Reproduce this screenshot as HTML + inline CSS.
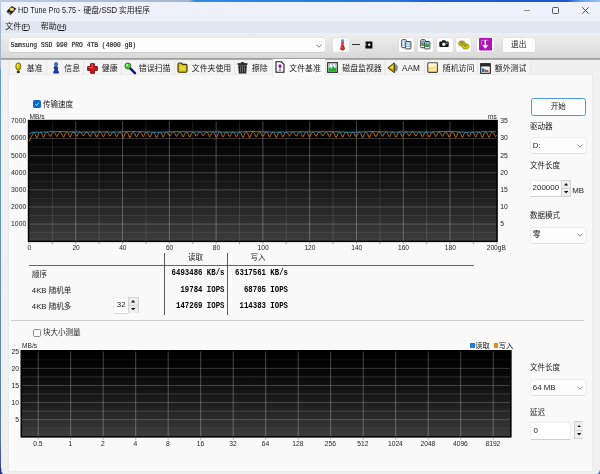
<!DOCTYPE html>
<html lang="zh-CN"><head><meta charset="utf-8"><title>HD Tune Pro 5.75 - 硬盘/SSD 实用程序</title>
<style>
html,body{margin:0;padding:0;width:600px;height:474px;overflow:hidden;background:#f0f0f0;}
body{position:relative;filter:blur(0.3px);font-family:'Liberation Sans','Noto Sans CJK SC',sans-serif;}
body>div,body>span,body>svg{position:absolute;}
.t{line-height:12px;height:12px;white-space:nowrap;font-family:'Liberation Sans','Noto Sans CJK SC',sans-serif;}
u{text-decoration:underline;text-decoration-thickness:0.5px;text-underline-offset:1px;}
</style></head><body>
<div style="left:0px;top:0px;width:600px;height:474px;background:#f0f0f0;"></div>
<div style="left:0px;top:0px;width:600px;height:20.5px;background:#eef1f9;"></div>
<div style="left:0px;top:20.5px;width:600px;height:12.2px;background:#e0e7f1;"></div>
<div style="left:0px;top:32.7px;width:600px;height:25.3px;background:linear-gradient(#f0f0f0 0,#e8e8e8 30%,#e0e0e0 70%,#d8d8d8 100%);"></div>
<div style="left:0px;top:57.5px;width:600px;height:2.5px;background:linear-gradient(#cccccc,#868686 40%,#8c8c8c 60%,#e2e2e2);"></div>
<div style="left:0px;top:60px;width:600px;height:15.4px;background:#f0f0f0;"></div>
<div style="left:0px;top:0px;width:600px;height:1.5px;background:linear-gradient(90deg,#bccbe2 0,#a8bcd6 20%,#a2b8d2 31.5%,#3088e4 32.5%,#2a7fe0 50%,#2a74dc 66%,#1c5cd4 72%,#1a56cc 94.5%,#5a9cea 96.5%,#9cc4f2 100%);"></div>
<div style="left:0px;top:0px;width:1.25px;height:474px;background:linear-gradient(#c4d0e2 0,#a4b6d4 20px,#a6b6cc 68px,#5b9bd0 70px,#6a96c0 200px,#5a78aa 440px,#3a4a92 466px,#262c88 474px);"></div>
<svg style="left:0;top:468px" width="4" height="6" viewBox="0 0 4 6"><path d="M0 0 L0 6 L3 6 Q0.8 4 1.2 0 Z" fill="#262c88"/></svg>
<svg style="left:596px;top:470px" width="4" height="4" viewBox="0 0 4 4"><path d="M4 0 L4 4 L1 4 Q3.4 3 4 0 Z" fill="#4a70c0"/></svg>
<div style="left:9.7px;top:60.2px;width:520.5px;height:15.3px;background:#f4f4f4;"></div>
<div style="left:9.299999999999999px;top:60.5px;width:0.8px;height:14.8px;background:#e6e6e6;"></div>
<div style="left:46.1px;top:60.5px;width:0.8px;height:14.8px;background:#e6e6e6;"></div>
<div style="left:83.1px;top:60.5px;width:0.8px;height:14.8px;background:#e6e6e6;"></div>
<div style="left:120.6px;top:60.5px;width:0.8px;height:14.8px;background:#e6e6e6;"></div>
<div style="left:173.6px;top:60.5px;width:0.8px;height:14.8px;background:#e6e6e6;"></div>
<div style="left:233.6px;top:60.5px;width:0.8px;height:14.8px;background:#e6e6e6;"></div>
<div style="left:383.6px;top:60.5px;width:0.8px;height:14.8px;background:#e6e6e6;"></div>
<div style="left:423.6px;top:60.5px;width:0.8px;height:14.8px;background:#e6e6e6;"></div>
<div style="left:476.6px;top:60.5px;width:0.8px;height:14.8px;background:#e6e6e6;"></div>
<div style="left:529.8000000000001px;top:60.5px;width:0.8px;height:14.8px;background:#e6e6e6;"></div>
<div style="left:8.5px;top:74.8px;width:583.3px;height:396.2px;background:#f9f9f9;box-shadow:0 0 0 0.6px #e6e6e6;"></div>
<div style="left:273px;top:59.4px;width:52px;height:16.6px;background:#fbfbfb;box-shadow:-0.6px 0 0 #e0e0e0,0.6px 0 0 #e0e0e0;"></div>
<svg style="left:5.5px;top:5px" width="11" height="11" viewBox="0 0 11 11"><path d="M0.7 6.2 L5.8 1 L10.3 3.8 L5 9.6 Z" fill="#141414"/><path d="M0.7 6.2 L5 9.6 L5 10.4 L0.7 7.2 Z" fill="#555"/><ellipse cx="5.9" cy="4.3" rx="2.3" ry="1.9" fill="#e2b54e"/><ellipse cx="5.7" cy="4" rx="1" ry="0.8" fill="#fff0c8"/><path d="M3 7 L4.6 8.3" stroke="#ddd" stroke-width="0.7"/></svg>
<span class="t" style="left:18px;top:5.10px;font-size:8.2px;color:#1a1a1a;transform:scaleX(0.885);transform-origin:0 50%;">HD Tune Pro 5.75 -</span>
<span class="t" style="left:83.5px;top:5.00px;font-size:7.75px;color:#1a1a1a;">硬盘/<span style="font-size:8.2px;letter-spacing:-0.4px">SSD</span> 实用程序</span>
<div style="left:523.6px;top:10.1px;width:6.4px;height:0.75px;background:#8c8c8c;"></div>
<div style="left:552.1px;top:7.1px;width:7.4px;height:7.4px;border:1.05px solid #555;border-radius:1.4px;box-sizing:border-box;"></div>
<svg style="left:582.3px;top:7.4px" width="7" height="7" viewBox="0 0 7 7"><path d="M0.3 0.3 L6.7 6.7 M6.7 0.3 L0.3 6.7" stroke="#444" stroke-width="0.95" fill="none"/></svg>
<span class="t" style="left:5.2px;top:21.20px;font-size:8px;color:#1a1a1a;">文件<span style="font-size:8px;letter-spacing:-0.6px">(<u>F</u>)</span></span>
<span class="t" style="left:40.8px;top:21.20px;font-size:8px;color:#1a1a1a;">帮助<span style="font-size:8px;letter-spacing:-0.6px">(<u>H</u>)</span></span>
<div style="left:8.5px;top:38px;width:316.5px;height:13.5px;background:#fdfdfd;border-radius:2px;box-shadow:0 0.5px 0 #bdbdbd, 0 0 0 0.5px #e3e3e3;"></div>
<span class="t" style="left:10.5px;top:39.70px;font-size:6.35px;color:#111;font-family:'Liberation Mono','Noto Sans Mono CJK SC',monospace;font-weight:normal;-webkit-text-stroke:0.12px #111;transform:scaleY(1.1);">Samsung SSD 990 PRO 4TB (4000 gB)</span>
<svg style="left:316px;top:43.5px" width="6" height="4" viewBox="0 0 6 4"><path d="M0.4 0.5 L3 3.2 L5.6 0.5" stroke="#666" stroke-width="0.8" fill="none"/></svg>
<div style="left:333.2px;top:38px;width:15.5px;height:14px;background:#fcfcfc;border-radius:2px;box-shadow:0 0 0 0.5px #dadada;"></div>
<svg style="left:338.5px;top:39px" width="7" height="12" viewBox="0 0 7 12"><rect x="2.5" y="0.5" width="2" height="7.5" rx="1" fill="#e83030" stroke="#8a2020" stroke-width="0.4"/><rect x="2.7" y="0.6" width="1.6" height="2.2" rx="0.8" fill="#6aa8d8"/><circle cx="3.5" cy="9.2" r="2.1" fill="#e02020" stroke="#7a1010" stroke-width="0.5"/><circle cx="2.9" cy="8.6" r="0.6" fill="#ff9a8a"/></svg>
<div style="left:352px;top:44.3px;width:8.4px;height:0.8px;background:#333;"></div>
<svg style="left:365px;top:41px" width="8" height="8" viewBox="0 0 8 8"><rect x="0.4" y="0.4" width="7" height="7.2" rx="0.6" fill="#0a0a0a"/><circle cx="4.2" cy="3.8" r="1.2" fill="#eee"/><rect x="0.4" y="2.6" width="1" height="1.6" fill="#ddd"/></svg>
<div style="left:398.5px;top:38px;width:15.5px;height:13.7px;background:#fcfcfc;border-radius:2px;box-shadow:0 0 0 0.5px #dcdcdc, 0 0.6px 0 #c8c8c8;"></div>
<div style="left:417.5px;top:38px;width:15.5px;height:13.7px;background:#fcfcfc;border-radius:2px;box-shadow:0 0 0 0.5px #dcdcdc, 0 0.6px 0 #c8c8c8;"></div>
<div style="left:437px;top:38px;width:15.5px;height:13.7px;background:#fcfcfc;border-radius:2px;box-shadow:0 0 0 0.5px #dcdcdc, 0 0.6px 0 #c8c8c8;"></div>
<div style="left:455.5px;top:38px;width:15.5px;height:13.7px;background:#fcfcfc;border-radius:2px;box-shadow:0 0 0 0.5px #dcdcdc, 0 0.6px 0 #c8c8c8;"></div>
<div style="left:477px;top:38px;width:16.5px;height:13.7px;background:#fcfcfc;border-radius:2px;box-shadow:0 0 0 0.5px #dcdcdc, 0 0.6px 0 #c8c8c8;"></div>
<svg style="left:400.8px;top:39.2px" width="11" height="11" viewBox="0 0 11 11"><rect x="0.7" y="0.7" width="4.6" height="8" rx="0.8" fill="#fff" stroke="#2e2e2e" stroke-width="0.9"/><rect x="1.4" y="1.6" width="3" height="5.4" fill="#9ccaf6"/><rect x="2" y="2.4" width="1.2" height="3.6" fill="#e8f4ff"/><rect x="4.7" y="2.5" width="5.2" height="7.4" rx="0.8" fill="#fff" stroke="#2e2e2e" stroke-width="0.9"/><rect x="5.4" y="3.4" width="3.6" height="4.6" fill="#8cc0f4"/><rect x="6.4" y="4.2" width="1.4" height="2.8" fill="#e8f4ff"/></svg>
<svg style="left:420px;top:39.2px" width="11" height="11" viewBox="0 0 11 11"><rect x="0.7" y="0.7" width="4.6" height="8" rx="0.8" fill="#fff" stroke="#2e2e2e" stroke-width="0.9"/><rect x="1.4" y="1.6" width="3" height="5.4" fill="#5a9ae0"/><rect x="1.4" y="4" width="3" height="2.4" fill="#38a838"/><rect x="2.8" y="3.2" width="1.4" height="1.4" fill="#e8d020"/><rect x="4.7" y="2.5" width="5.2" height="7.4" rx="0.8" fill="#fff" stroke="#2e2e2e" stroke-width="0.9"/><rect x="5.4" y="3.4" width="3.6" height="4.6" fill="#4a90e0"/><rect x="5.4" y="5.2" width="3.6" height="2.6" fill="#2e9a2e"/><rect x="7" y="4.2" width="1.4" height="1.4" fill="#e8d020"/></svg>
<svg style="left:439.2px;top:40.2px" width="10" height="8" viewBox="0 0 10 8"><rect x="0.3" y="1.6" width="9.4" height="5.4" rx="0.8" fill="#161616"/><rect x="3" y="0.3" width="3.6" height="1.8" rx="0.5" fill="#161616"/><circle cx="4.8" cy="4.3" r="1.7" fill="#f2f2f2"/><rect x="7" y="2.6" width="1.8" height="1.4" fill="#28b040"/></svg>
<svg style="left:458px;top:39.6px" width="12" height="10" viewBox="0 0 12 10"><ellipse cx="3.8" cy="3.4" rx="3.3" ry="2.7" fill="#c4bc08" stroke="#7a7400" stroke-width="0.5"/><ellipse cx="3.8" cy="2.8" rx="1.6" ry="1.1" fill="#8a8660"/><ellipse cx="7.6" cy="6.3" rx="3.5" ry="2.8" fill="#cfc80c" stroke="#7a7400" stroke-width="0.5"/><ellipse cx="7.4" cy="5.6" rx="1.7" ry="1.1" fill="#8a8660"/></svg>
<svg style="left:479px;top:38px" width="13.4" height="12.6" viewBox="0 0 13.4 12.6"><rect x="0" y="0" width="13.4" height="12.6" rx="1" fill="#ae14b4"/><path d="M2.4 7 V2.2 H9.4" stroke="#d678dc" stroke-width="0.9" fill="none"/><path d="M6.3 2 V8.4" stroke="#fff" stroke-width="1.5"/><path d="M3.2 7.2 L6.3 10.8 L9.4 7.2 Z" fill="#fff"/></svg>
<div style="left:503px;top:38px;width:31.8px;height:13.6px;background:#fdfdfd;border-radius:2px;box-shadow:0 0 0 0.5px #dedede, 0 0.6px 0 #c6c6c6;"></div>
<span class="t" style="left:418.70000000000005px;width:200px;text-align:center;top:38.80px;font-size:7.6px;color:#1a1a1a;">退出</span>
<svg style="left:14.6px;top:61.8px" width="7" height="12" viewBox="0 0 7 12"><ellipse cx="3.3" cy="4.4" rx="2.5" ry="3.7" fill="#d4be00" stroke="#4a4000" stroke-width="0.7"/><ellipse cx="2.7" cy="3.6" rx="0.9" ry="1.8" fill="#f2ea4a"/><rect x="2.5" y="7.8" width="1.7" height="1.4" fill="#7a6600"/><rect x="1.9" y="8.9" width="2.9" height="2.1" rx="0.6" fill="#3a3000"/></svg>
<span class="t" style="left:26.8px;top:62.60px;font-size:7.9px;color:#1a1a1a;">基准</span>
<svg style="left:51.5px;top:61.8px" width="8" height="12" viewBox="0 0 8 12"><circle cx="4.1" cy="2.2" r="1.7" fill="#2a80e0" stroke="#0a2a80" stroke-width="0.5"/><path d="M2.2 4.8 H5.4 V9.4 H6.4 V11.1 H1.8 V9.4 H2.9 V6.4 H2.2 Z" fill="#1440c8" stroke="#06104a" stroke-width="0.7"/></svg>
<span class="t" style="left:64.3px;top:62.60px;font-size:7.9px;color:#1a1a1a;">信息</span>
<svg style="left:87.3px;top:62.5px" width="11" height="11" viewBox="0 0 11 11"><path d="M3.6 0.7 H7.4 V3.6 H10.3 V7.4 H7.4 V10.3 H3.6 V7.4 H0.7 V3.6 H3.6 Z" fill="#dc1414" stroke="#5a0808" stroke-width="0.9"/><path d="M4.4 1.6 H5.4 V4.4 H1.6" stroke="#ff7a6a" stroke-width="0.7" fill="none"/></svg>
<span class="t" style="left:101.8px;top:62.60px;font-size:7.9px;color:#1a1a1a;">健康</span>
<svg style="left:124px;top:61.5px" width="13" height="13" viewBox="0 0 13 13"><path d="M6.2 6.4 L11 11.2" stroke="#0c1478" stroke-width="2.4" stroke-linecap="round"/><circle cx="3.9" cy="3.9" r="3" fill="#4fd030" stroke="#1e5a14" stroke-width="0.8"/><circle cx="3.1" cy="3.1" r="1" fill="#d9ffc8"/></svg>
<span class="t" style="left:138.8px;top:62.60px;font-size:7.9px;color:#1a1a1a;">错误扫描</span>
<svg style="left:177px;top:62.2px" width="11" height="11" viewBox="0 0 11 11"><path d="M1 2.4 Q1 1 2.2 1 H4.6 L5.6 2.4 H8.8 Q10 2.4 10 3.6 V9 Q10 10.2 8.8 10.2 H2.2 Q1 10.2 1 9 Z" fill="#d8c21a" stroke="#3a3000" stroke-width="1.1"/><rect x="2.6" y="4.2" width="5.8" height="4.4" fill="#e8d638"/></svg>
<span class="t" style="left:191.8px;top:62.60px;font-size:7.9px;color:#1a1a1a;">文件夹使用</span>
<svg style="left:236.5px;top:62px" width="11" height="12" viewBox="0 0 11 12"><rect x="0.6" y="1.2" width="9.8" height="1.7" fill="#1a1a1a"/><rect x="3.8" y="0.2" width="3.4" height="1.3" fill="#1a1a1a"/><path d="M1.2 3.2 H9.8 L9.2 11.4 H1.8 Z" fill="#222"/><path d="M3.6 4.2V10.4M5.5 4.2V10.4M7.4 4.2V10.4" stroke="#a8a8a8" stroke-width="0.6"/></svg>
<span class="t" style="left:251.8px;top:62.60px;font-size:7.9px;color:#1a1a1a;">擦除</span>
<svg style="left:275px;top:61px" width="10" height="12" viewBox="0 0 10 12"><path d="M1 0.8 H6.4 L9 3.4 V11.2 H1 Z" fill="#fff" stroke="#1a1a1a" stroke-width="1.1"/><path d="M5 2.8 L6.8 5 L5 8.2 L3.2 5 Z" fill="#a818b8"/><rect x="4.4" y="8.4" width="1.2" height="1.6" fill="#333"/></svg>
<span class="t" style="left:289.3px;top:62.60px;font-size:7.9px;color:#1a1a1a;">文件基准</span>
<svg style="left:327px;top:62px" width="11" height="11" viewBox="0 0 11 11"><rect x="0.7" y="0.7" width="9.6" height="9.6" fill="#f0f0f0" stroke="#1a1a1a" stroke-width="1.1"/><path d="M1.6 9.8 V6.5 L3 4.6 L4.4 7 L6 3.4 L7.6 6.2 L9.4 4.8 V9.8 Z" fill="#1fae2c"/><path d="M2 3 h1 M5 2.4 h1 M8 3 h1" stroke="#2a5ad0" stroke-width="0.8"/></svg>
<span class="t" style="left:342.3px;top:62.60px;font-size:7.9px;color:#1a1a1a;">磁盘监视器</span>
<svg style="left:387.2px;top:62px" width="12" height="12" viewBox="0 0 12 12"><ellipse cx="8.2" cy="5.8" rx="2.6" ry="3.6" fill="#8a8a8a"/><path d="M0.8 5.8 L7.4 0.8 V10.8 Z" fill="#b8a010" stroke="#3a3000" stroke-width="0.9" stroke-linejoin="round"/><path d="M2.6 5.6 L6.2 3 V7" fill="#f0e030"/></svg>
<span class="t" style="left:402.1px;top:62.60px;font-size:7.9px;color:#1a1a1a;"><span style="font-size:8.2px">AAM</span></span>
<svg style="left:427px;top:62.4px" width="11" height="11" viewBox="0 0 11 11"><rect x="0.8" y="0.8" width="9.6" height="9.6" rx="0.8" fill="#f9eaa6" stroke="#4a4438" stroke-width="1.1"/><rect x="1.6" y="1.6" width="8" height="3" fill="#fdf6d4"/><path d="M2.2 7.8 L4.2 5.8 L5.6 6.8 L8.6 3.2" stroke="#e8c060" stroke-width="0.8" fill="none"/></svg>
<span class="t" style="left:442.8px;top:62.60px;font-size:7.9px;color:#1a1a1a;">随机访问</span>
<svg style="left:479.8px;top:62.8px" width="11" height="11" viewBox="0 0 11 11"><rect x="0.7" y="0.7" width="9.6" height="9.6" fill="#fff" stroke="#1a1a1a" stroke-width="1.1"/><rect x="0.7" y="0.7" width="9.6" height="2.8" fill="#2a2a2a"/><rect x="1.8" y="5.4" width="2.6" height="3.6" fill="#2a6ad8"/><rect x="4.4" y="6.4" width="2.2" height="2.6" fill="#28a838"/><rect x="6.4" y="7" width="2" height="2" fill="#d83020"/></svg>
<span class="t" style="left:494.8px;top:62.60px;font-size:7.9px;color:#1a1a1a;">额外测试</span>
<div style="left:32.6px;top:100px;width:8.3px;height:8.4px;background:#0f69c4;border-radius:1.7px;"></div>
<svg style="left:33px;top:100px" width="8" height="8" viewBox="0 0 8 8"><path d="M2.3 4.3 L3.5 5.5 L5.8 2.9" stroke="#fff" stroke-width="0.8" fill="none"/></svg>
<span class="t" style="left:43px;top:98.80px;font-size:7.5px;color:#1a1a1a;">传输速度</span>
<svg style="left:0;top:0" width="600" height="474" viewBox="0 0 600 474"><defs><linearGradient id="g1" x1="0" y1="0" x2="0" y2="1"><stop offset="0" stop-color="#000"/><stop offset="0.18" stop-color="#030303"/><stop offset="0.6" stop-color="#1c1c1c"/><stop offset="1" stop-color="#3d3d3d"/></linearGradient></defs><rect x="28.0" y="120.0" width="469.5" height="121.9" fill="url(#g1)"/><line x1="28.0" x2="497.5" y1="232.65" y2="232.65" stroke="rgba(255,255,255,0.09)" stroke-width="0.8"/><line x1="28.0" x2="497.5" y1="224.10" y2="224.10" stroke="rgba(255,255,255,0.27)" stroke-width="0.8"/><line x1="28.0" x2="497.5" y1="215.55" y2="215.55" stroke="rgba(255,255,255,0.09)" stroke-width="0.8"/><line x1="28.0" x2="497.5" y1="207.00" y2="207.00" stroke="rgba(255,255,255,0.27)" stroke-width="0.8"/><line x1="28.0" x2="497.5" y1="198.45" y2="198.45" stroke="rgba(255,255,255,0.09)" stroke-width="0.8"/><line x1="28.0" x2="497.5" y1="189.90" y2="189.90" stroke="rgba(255,255,255,0.27)" stroke-width="0.8"/><line x1="28.0" x2="497.5" y1="181.35" y2="181.35" stroke="rgba(255,255,255,0.09)" stroke-width="0.8"/><line x1="28.0" x2="497.5" y1="172.80" y2="172.80" stroke="rgba(255,255,255,0.27)" stroke-width="0.8"/><line x1="28.0" x2="497.5" y1="164.25" y2="164.25" stroke="rgba(255,255,255,0.09)" stroke-width="0.8"/><line x1="28.0" x2="497.5" y1="155.70" y2="155.70" stroke="rgba(255,255,255,0.27)" stroke-width="0.8"/><line x1="28.0" x2="497.5" y1="147.15" y2="147.15" stroke="rgba(255,255,255,0.09)" stroke-width="0.8"/><line x1="28.0" x2="497.5" y1="138.60" y2="138.60" stroke="rgba(255,255,255,0.27)" stroke-width="0.8"/><line x1="28.0" x2="497.5" y1="130.05" y2="130.05" stroke="rgba(255,255,255,0.09)" stroke-width="0.8"/><line x1="52.39" x2="52.39" y1="120.0" y2="241.9" stroke="rgba(255,255,255,0.13)" stroke-width="0.9"/><line x1="75.78" x2="75.78" y1="120.0" y2="241.9" stroke="rgba(255,255,255,0.3)" stroke-width="0.9"/><line x1="99.17" x2="99.17" y1="120.0" y2="241.9" stroke="rgba(255,255,255,0.13)" stroke-width="0.9"/><line x1="122.56" x2="122.56" y1="120.0" y2="241.9" stroke="rgba(255,255,255,0.3)" stroke-width="0.9"/><line x1="145.95" x2="145.95" y1="120.0" y2="241.9" stroke="rgba(255,255,255,0.13)" stroke-width="0.9"/><line x1="169.34" x2="169.34" y1="120.0" y2="241.9" stroke="rgba(255,255,255,0.3)" stroke-width="0.9"/><line x1="192.73" x2="192.73" y1="120.0" y2="241.9" stroke="rgba(255,255,255,0.13)" stroke-width="0.9"/><line x1="216.12" x2="216.12" y1="120.0" y2="241.9" stroke="rgba(255,255,255,0.3)" stroke-width="0.9"/><line x1="239.51" x2="239.51" y1="120.0" y2="241.9" stroke="rgba(255,255,255,0.13)" stroke-width="0.9"/><line x1="262.90" x2="262.90" y1="120.0" y2="241.9" stroke="rgba(255,255,255,0.3)" stroke-width="0.9"/><line x1="286.29" x2="286.29" y1="120.0" y2="241.9" stroke="rgba(255,255,255,0.13)" stroke-width="0.9"/><line x1="309.68" x2="309.68" y1="120.0" y2="241.9" stroke="rgba(255,255,255,0.3)" stroke-width="0.9"/><line x1="333.07" x2="333.07" y1="120.0" y2="241.9" stroke="rgba(255,255,255,0.13)" stroke-width="0.9"/><line x1="356.46" x2="356.46" y1="120.0" y2="241.9" stroke="rgba(255,255,255,0.3)" stroke-width="0.9"/><line x1="379.85" x2="379.85" y1="120.0" y2="241.9" stroke="rgba(255,255,255,0.13)" stroke-width="0.9"/><line x1="403.24" x2="403.24" y1="120.0" y2="241.9" stroke="rgba(255,255,255,0.3)" stroke-width="0.9"/><line x1="426.63" x2="426.63" y1="120.0" y2="241.9" stroke="rgba(255,255,255,0.13)" stroke-width="0.9"/><line x1="450.02" x2="450.02" y1="120.0" y2="241.9" stroke="rgba(255,255,255,0.3)" stroke-width="0.9"/><line x1="473.41" x2="473.41" y1="120.0" y2="241.9" stroke="rgba(255,255,255,0.13)" stroke-width="0.9"/><rect x="28.5" y="120.5" width="468.5" height="120.9" fill="none" stroke="#000" stroke-width="1.4"/><line x1="29.00" x2="29.00" y1="241.9" y2="244.1" stroke="#8a8a8a" stroke-width="0.7"/><line x1="52.39" x2="52.39" y1="241.9" y2="244.1" stroke="#8a8a8a" stroke-width="0.7"/><line x1="75.78" x2="75.78" y1="241.9" y2="244.1" stroke="#8a8a8a" stroke-width="0.7"/><line x1="99.17" x2="99.17" y1="241.9" y2="244.1" stroke="#8a8a8a" stroke-width="0.7"/><line x1="122.56" x2="122.56" y1="241.9" y2="244.1" stroke="#8a8a8a" stroke-width="0.7"/><line x1="145.95" x2="145.95" y1="241.9" y2="244.1" stroke="#8a8a8a" stroke-width="0.7"/><line x1="169.34" x2="169.34" y1="241.9" y2="244.1" stroke="#8a8a8a" stroke-width="0.7"/><line x1="192.73" x2="192.73" y1="241.9" y2="244.1" stroke="#8a8a8a" stroke-width="0.7"/><line x1="216.12" x2="216.12" y1="241.9" y2="244.1" stroke="#8a8a8a" stroke-width="0.7"/><line x1="239.51" x2="239.51" y1="241.9" y2="244.1" stroke="#8a8a8a" stroke-width="0.7"/><line x1="262.90" x2="262.90" y1="241.9" y2="244.1" stroke="#8a8a8a" stroke-width="0.7"/><line x1="286.29" x2="286.29" y1="241.9" y2="244.1" stroke="#8a8a8a" stroke-width="0.7"/><line x1="309.68" x2="309.68" y1="241.9" y2="244.1" stroke="#8a8a8a" stroke-width="0.7"/><line x1="333.07" x2="333.07" y1="241.9" y2="244.1" stroke="#8a8a8a" stroke-width="0.7"/><line x1="356.46" x2="356.46" y1="241.9" y2="244.1" stroke="#8a8a8a" stroke-width="0.7"/><line x1="379.85" x2="379.85" y1="241.9" y2="244.1" stroke="#8a8a8a" stroke-width="0.7"/><line x1="403.24" x2="403.24" y1="241.9" y2="244.1" stroke="#8a8a8a" stroke-width="0.7"/><line x1="426.63" x2="426.63" y1="241.9" y2="244.1" stroke="#8a8a8a" stroke-width="0.7"/><line x1="450.02" x2="450.02" y1="241.9" y2="244.1" stroke="#8a8a8a" stroke-width="0.7"/><line x1="473.41" x2="473.41" y1="241.9" y2="244.1" stroke="#8a8a8a" stroke-width="0.7"/><line x1="496.80" x2="496.80" y1="241.9" y2="244.1" stroke="#8a8a8a" stroke-width="0.7"/><polyline points="29.00,141.16 29.50,140.21 30.00,139.26 30.50,138.31 31.00,137.36 31.50,136.41 32.00,135.46 32.50,134.51 33.00,133.56 33.50,132.27 34.00,132.41 34.50,132.86 35.00,133.66 35.50,134.81 36.00,136.27 36.50,137.56 37.00,137.69 37.50,136.77 38.00,135.23 38.50,133.97 39.00,133.06 39.50,132.51 40.00,132.28 40.50,132.33 41.00,132.67 41.50,133.33 42.00,134.30 42.50,135.55 43.00,136.84 43.50,137.27 44.00,136.65 44.50,135.27 45.00,134.05 45.50,133.15 46.00,132.58 46.50,132.30 47.00,132.27 47.50,132.48 48.00,132.94 48.50,133.67 49.00,134.64 49.50,135.81 50.00,136.38 50.50,136.15 51.00,135.13 51.50,134.05 52.00,133.21 52.50,132.64 53.00,132.33 53.50,132.25 54.00,132.38 54.50,132.74 55.00,133.37 55.50,134.26 56.00,135.41 56.50,136.33 57.00,136.39 57.50,135.61 58.00,134.46 58.50,133.52 59.00,132.83 59.50,132.42 60.00,132.26 60.50,132.33 61.00,132.67 61.50,133.30 62.00,134.24 62.50,135.49 63.00,136.74 63.50,137.12 64.00,136.53 64.50,135.17 65.00,134.00 65.50,133.12 66.00,132.56 66.50,132.29 67.00,132.29 67.50,132.56 68.00,133.12 68.50,134.00 69.00,135.17 69.50,136.53 70.00,137.11 70.50,136.73 71.00,135.48 71.50,134.24 72.00,133.29 72.50,132.66 73.00,132.33 73.50,132.26 74.00,132.42 74.50,132.82 75.00,133.49 75.50,134.40 76.00,135.50 76.50,136.23 77.00,136.16 77.50,135.26 78.00,134.16 78.50,133.30 79.00,132.71 79.50,132.37 80.00,132.24 80.50,132.32 81.00,132.60 81.50,133.11 82.00,133.85 82.50,134.81 83.00,135.70 83.50,135.89 84.00,135.38 84.50,134.34 85.00,133.48 85.50,132.84 86.00,132.44 86.50,132.26 87.00,132.28 87.50,132.52 88.00,133.02 88.50,133.80 89.00,134.85 89.50,136.05 90.00,136.60 90.50,136.23 91.00,135.12 91.50,134.03 92.00,133.18 92.50,132.61 93.00,132.32 93.50,132.27 94.00,132.48 94.50,132.97 95.00,133.78 95.50,134.91 96.00,136.31 96.50,137.16 97.00,137.05 97.50,135.90 98.00,134.58 98.50,133.53 99.00,132.80 99.50,132.39 100.00,132.26 100.50,132.39 101.00,132.78 101.50,133.48 102.00,134.47 102.50,135.70 103.00,136.76 103.50,136.83 104.00,136.01 104.50,134.70 105.00,133.65 105.50,132.90 106.00,132.45 106.50,132.26 107.00,132.30 107.50,132.57 108.00,133.10 108.50,133.88 109.00,134.89 109.50,135.94 110.00,136.32 110.50,135.85 111.00,134.74 111.50,133.75 112.00,133.01 112.50,132.52 113.00,132.29 113.50,132.27 114.00,132.46 114.50,132.91 115.00,133.64 115.50,134.65 116.00,135.90 116.50,136.57 117.00,136.40 117.50,135.38 118.00,134.24 118.50,133.34 119.00,132.71 119.50,132.36 120.00,132.26 120.50,132.42 121.00,132.86 121.50,133.64 122.00,134.76 122.50,136.19 123.00,137.36 123.50,137.43 124.00,136.45 124.50,135.01 125.00,133.84 125.50,132.99 126.00,132.48 126.50,132.27 127.00,132.36 127.50,132.75 128.00,133.48 128.50,134.55 129.00,135.94 129.50,137.30 130.00,137.67 130.50,136.97 131.00,135.43 131.50,134.13 132.00,133.18 132.50,132.58 133.00,132.30 133.50,132.30 134.00,132.56 134.50,133.11 135.00,133.97 135.50,135.10 136.00,136.41 136.50,136.96 137.00,136.57 137.50,135.36 138.00,134.16 138.50,133.25 139.00,132.65 139.50,132.33 140.00,132.26 140.50,132.42 141.00,132.83 141.50,133.51 142.00,134.47 142.50,135.66 143.00,136.50 143.50,136.48 144.00,135.56 144.50,134.39 145.00,133.45 145.50,132.79 146.00,132.40 146.50,132.26 147.00,132.36 147.50,132.71 148.00,133.37 148.50,134.36 149.00,135.64 149.50,136.85 150.00,137.13 150.50,136.47 151.00,135.09 151.50,133.94 152.00,133.08 152.50,132.53 153.00,132.29 153.50,132.32 154.00,132.63 154.50,133.27 155.00,134.26 155.50,135.58 156.00,137.04 156.50,137.66 157.00,137.14 157.50,135.72 158.00,134.38 158.50,133.35 159.00,132.68 159.50,132.33 160.00,132.28 160.50,132.49 161.00,133.00 161.50,133.82 162.00,134.93 162.50,136.27 163.00,137.03 163.50,136.86 164.00,135.70 164.50,134.42 165.00,133.42 165.50,132.75 166.00,132.37 166.50,132.25 167.00,132.36 167.50,132.70 168.00,133.30 168.50,134.14 169.00,135.19 169.50,136.09 170.00,136.16 170.50,135.47 171.00,134.35 171.50,133.46 172.00,132.81 172.50,132.42 173.00,132.25 173.50,132.30 174.00,132.55 174.50,133.04 175.00,133.80 175.50,134.81 176.00,135.89 176.50,136.31 177.00,135.88 177.50,134.79 178.00,133.80 178.50,133.04 179.00,132.54 179.50,132.29 180.00,132.27 180.50,132.49 181.00,132.98 181.50,133.78 182.00,134.88 182.50,136.24 183.00,136.94 183.50,136.75 184.00,135.62 184.50,134.38 185.00,133.41 185.50,132.73 186.00,132.36 186.50,132.26 187.00,132.42 187.50,132.85 188.00,133.59 188.50,134.63 189.00,135.92 189.50,136.93 190.00,136.93 190.50,135.99 191.00,134.66 191.50,133.61 192.00,132.87 192.50,132.43 193.00,132.26 193.50,132.33 194.00,132.63 194.50,133.18 195.00,133.99 195.50,135.02 196.00,136.01 196.50,136.26 197.00,135.72 197.50,134.57 198.00,133.61 198.50,132.91 199.00,132.47 199.50,132.27 200.00,132.27 200.50,132.47 201.00,132.88 201.50,133.54 202.00,134.43 202.50,135.48 203.00,135.96 203.50,135.71 204.00,134.78 204.50,133.83 205.00,133.09 205.50,132.58 206.00,132.31 206.50,132.25 207.00,132.41 207.50,132.80 208.00,133.48 208.50,134.46 209.00,135.69 209.50,136.59 210.00,136.62 210.50,135.70 211.00,134.50 211.50,133.53 212.00,132.83 212.50,132.41 213.00,132.26 213.50,132.37 214.00,132.75 214.50,133.46 215.00,134.50 215.50,135.84 216.00,137.09 216.50,137.35 217.00,136.63 217.50,135.17 218.00,133.97 218.50,133.08 219.00,132.53 219.50,132.29 220.00,132.31 220.50,132.61 221.00,133.20 221.50,134.11 222.00,135.29 222.50,136.59 223.00,137.11 223.50,136.60 224.00,135.31 224.50,134.11 225.00,133.20 225.50,132.61 226.00,132.31 226.50,132.26 227.00,132.45 227.50,132.88 228.00,133.59 228.50,134.56 229.00,135.73 229.50,136.43 230.00,136.31 230.50,135.32 231.00,134.20 231.50,133.32 232.00,132.71 232.50,132.36 233.00,132.25 233.50,132.36 234.00,132.72 234.50,133.36 235.00,134.29 235.50,135.49 236.00,136.57 236.50,136.71 237.00,136.00 237.50,134.75 238.00,133.72 238.50,132.95 239.00,132.47 239.50,132.27 240.00,132.33 240.50,132.66 241.00,133.31 241.50,134.32 242.00,135.66 242.50,137.08 243.00,137.64 243.50,137.06 244.00,135.62 244.50,134.30 245.00,133.30 245.50,132.65 246.00,132.32 246.50,132.29 247.00,132.56 247.50,133.15 248.00,134.10 248.50,135.38 249.00,136.92 249.50,137.68 250.00,137.39 250.50,136.05 251.00,134.62 251.50,133.52 252.00,132.78 252.50,132.38 253.00,132.26 253.50,132.42 254.00,132.85 254.50,133.59 255.00,134.61 255.50,135.86 256.00,136.83 256.50,136.81 257.00,135.88 257.50,134.58 258.00,133.56 258.50,132.84 259.00,132.42 259.50,132.26 260.00,132.32 260.50,132.62 261.00,133.19 261.50,134.02 262.00,135.10 262.50,136.17 263.00,136.48 263.50,135.96 264.00,134.77 264.50,133.76 265.00,133.00 265.50,132.51 266.00,132.28 266.50,132.28 267.00,132.53 267.50,133.05 268.00,133.88 268.50,135.01 269.00,136.36 269.50,137.00 270.00,136.69 270.50,135.51 271.00,134.30 271.50,133.35 272.00,132.70 272.50,132.35 273.00,132.27 273.50,132.46 274.00,132.95 274.50,133.77 275.00,134.93 275.50,136.36 276.00,137.36 276.50,137.33 277.00,136.20 277.50,134.79 278.00,133.67 278.50,132.88 279.00,132.43 279.50,132.26 280.00,132.37 280.50,132.74 281.00,133.41 281.50,134.37 282.00,135.58 282.50,136.67 283.00,136.84 283.50,136.13 284.00,134.79 284.50,133.72 285.00,132.95 285.50,132.48 286.00,132.27 286.50,132.29 287.00,132.52 287.50,133.00 288.00,133.71 288.50,134.65 289.00,135.67 289.50,136.08 290.00,135.69 290.50,134.67 291.00,133.72 291.50,133.00 292.00,132.53 292.50,132.29 293.00,132.25 293.50,132.41 294.00,132.79 294.50,133.43 295.00,134.32 295.50,135.42 296.00,136.11 296.50,136.05 297.00,135.17 297.50,134.13 298.00,133.29 298.50,132.70 299.00,132.36 299.50,132.25 300.00,132.37 300.50,132.74 301.00,133.41 301.50,134.38 302.00,135.63 302.50,136.74 303.00,136.89 303.50,136.13 304.00,134.83 304.50,133.75 305.00,132.96 305.50,132.48 306.00,132.27 306.50,132.32 307.00,132.64 307.50,133.25 308.00,134.18 308.50,135.38 309.00,136.63 309.50,137.07 310.00,136.50 310.50,135.18 311.00,134.01 311.50,133.13 312.00,132.57 312.50,132.30 313.00,132.27 313.50,132.48 314.00,132.94 314.50,133.66 315.00,134.63 315.50,135.78 316.00,136.34 316.50,136.10 317.00,135.08 317.50,134.01 318.00,133.18 318.50,132.63 319.00,132.33 319.50,132.25 320.00,132.37 320.50,132.70 321.00,133.29 321.50,134.12 322.00,135.16 322.50,136.00 323.00,136.04 323.50,135.32 324.00,134.26 324.50,133.40 325.00,132.78 325.50,132.40 326.00,132.25 326.50,132.32 327.00,132.63 327.50,133.22 328.00,134.11 328.50,135.28 329.00,136.48 329.50,136.87 330.00,136.34 330.50,135.06 331.00,133.95 331.50,133.11 332.00,132.56 332.50,132.29 333.00,132.30 333.50,132.58 334.00,133.17 334.50,134.11 335.00,135.38 335.50,136.88 336.00,137.56 336.50,137.19 337.00,135.85 337.50,134.49 338.00,133.44 338.50,132.73 339.00,132.36 339.50,132.27 340.00,132.46 340.50,132.95 341.00,133.76 341.50,134.88 342.00,136.24 342.50,137.17 343.00,137.10 343.50,135.99 344.00,134.64 344.50,133.57 345.00,132.83 345.50,132.41 346.00,132.26 346.50,132.35 347.00,132.69 347.50,133.31 348.00,134.20 348.50,135.33 349.00,136.38 349.50,136.57 350.00,135.93 350.50,134.69 351.00,133.68 351.50,132.94 352.00,132.48 352.50,132.27 353.00,132.29 353.50,132.55 354.00,133.09 354.50,133.92 355.00,135.03 355.50,136.29 356.00,136.86 356.50,136.45 357.00,135.27 357.50,134.12 358.00,133.23 358.50,132.63 359.00,132.32 359.50,132.27 360.00,132.49 360.50,133.01 361.00,133.88 361.50,135.10 362.00,136.61 362.50,137.53 363.00,137.44 363.50,136.21 364.00,134.79 364.50,133.66 365.00,132.86 365.50,132.41 366.00,132.27 366.50,132.41 367.00,132.87 367.50,133.66 368.00,134.80 368.50,136.23 369.00,137.47 369.50,137.56 370.00,136.63 370.50,135.11 371.00,133.89 371.50,133.02 372.00,132.49 372.50,132.28 373.00,132.32 373.50,132.63 374.00,133.23 374.50,134.12 375.00,135.26 375.50,136.42 376.00,136.81 376.50,136.25 377.00,134.99 377.50,133.88 378.00,133.07 378.50,132.54 379.00,132.29 379.50,132.27 380.00,132.46 380.50,132.90 381.00,133.60 381.50,134.55 382.00,135.71 382.50,136.29 383.00,136.10 383.50,135.12 384.00,134.06 384.50,133.23 385.00,132.65 385.50,132.34 386.00,132.25 386.50,132.39 387.00,132.78 387.50,133.46 388.00,134.43 388.50,135.68 389.00,136.69 389.50,136.76 390.00,135.92 390.50,134.66 391.00,133.64 391.50,132.89 392.00,132.44 392.50,132.27 393.00,132.34 393.50,132.70 394.00,133.36 394.50,134.35 395.00,135.64 395.50,136.91 396.00,137.28 396.50,136.64 397.00,135.22 397.50,134.02 398.00,133.12 398.50,132.56 399.00,132.29 399.50,132.29 400.00,132.54 400.50,133.08 401.00,133.90 401.50,134.98 402.00,136.23 402.50,136.75 403.00,136.37 403.50,135.21 404.00,134.06 404.50,133.19 405.00,132.62 405.50,132.32 406.00,132.25 406.50,132.40 407.00,132.76 407.50,133.37 408.00,134.20 408.50,135.22 409.00,135.91 409.50,135.87 410.00,135.05 410.50,134.04 411.00,133.24 411.50,132.68 412.00,132.36 412.50,132.24 413.00,132.32 413.50,132.61 414.00,133.14 414.50,133.92 415.00,134.94 415.50,135.91 416.00,136.13 416.50,135.61 417.00,134.52 417.50,133.60 418.00,132.91 418.50,132.47 419.00,132.27 419.50,132.30 420.00,132.56 420.50,133.11 421.00,133.97 421.50,135.12 422.00,136.43 422.50,137.01 423.00,136.59 423.50,135.36 424.00,134.17 424.50,133.25 425.00,132.64 425.50,132.32 426.00,132.27 426.50,132.48 427.00,132.98 427.50,133.80 428.00,134.92 428.50,136.29 429.00,137.10 429.50,136.96 430.00,135.80 430.50,134.50 431.00,133.48 431.50,132.77 432.00,132.38 432.50,132.26 433.00,132.37 433.50,132.74 434.00,133.38 434.50,134.29 435.00,135.41 435.50,136.38 436.00,136.44 436.50,135.70 437.00,134.49 437.50,133.53 438.00,132.85 438.50,132.43 439.00,132.26 439.50,132.30 440.00,132.56 440.50,133.06 441.00,133.83 441.50,134.83 442.00,135.90 442.50,136.31 443.00,135.87 443.50,134.78 444.00,133.79 444.50,133.03 445.00,132.54 445.50,132.29 446.00,132.27 446.50,132.49 447.00,132.98 447.50,133.78 448.00,134.89 448.50,136.27 449.00,137.00 449.50,136.83 450.00,135.70 450.50,134.45 451.00,133.45 451.50,132.76 452.00,132.37 452.50,132.27 453.00,132.44 453.50,132.91 454.00,133.74 454.50,134.91 455.00,136.40 455.50,137.58 456.00,137.62 456.50,136.58 457.00,135.08 457.50,133.86 458.00,132.99 458.50,132.48 459.00,132.27 459.50,132.36 460.00,132.73 460.50,133.43 461.00,134.45 461.50,135.75 462.00,137.01 462.50,137.34 463.00,136.66 463.50,135.20 464.00,133.99 464.50,133.11 465.00,132.55 465.50,132.29 466.00,132.29 466.50,132.53 467.00,133.04 467.50,133.83 468.00,134.89 468.50,136.11 469.00,136.64 469.50,136.31 470.00,135.19 470.50,134.07 471.00,133.21 471.50,132.63 472.00,132.32 472.50,132.26 473.00,132.42 473.50,132.84 474.00,133.55 474.50,134.55 475.00,135.81 475.50,136.70 476.00,136.72 476.50,135.76 477.00,134.54 477.50,133.54 478.00,132.83 478.50,132.41 479.00,132.26 479.50,132.37 480.00,132.76 480.50,133.48 481.00,134.54 481.50,135.91 482.00,137.21 482.50,137.49 483.00,136.76 483.50,135.27 484.00,134.04 484.50,133.12 485.00,132.55 485.50,132.29 486.00,132.32 486.50,132.64 487.00,133.28 487.50,134.26 488.00,135.54 488.50,136.96 489.00,137.53 489.50,136.99 490.00,135.59 490.50,134.28 491.00,133.29 491.50,132.65 492.00,132.33 492.50,132.27 493.00,132.47 493.50,132.93 494.00,133.68 494.50,134.68 495.00,135.89 495.50,136.57 496.00,136.42 496.50,135.37" fill="none" stroke="#cf7012" stroke-width="1.0" stroke-linejoin="round"/><polyline points="29.0,134.32 30.0,133.47 31.0,132.61 32.0,132.20 33.0,132.31 34.0,132.20 35.0,132.24 36.0,132.08 37.0,132.11 38.0,132.23 39.0,132.22 40.0,132.35 41.0,132.22 42.0,132.19 43.0,132.09 44.0,131.98 45.0,131.92 46.0,132.12 47.0,132.11 48.0,131.96 49.0,131.77 50.0,131.73 51.0,131.72 52.0,131.63 53.0,131.87 54.0,131.72 55.0,131.78 56.0,131.70 57.0,131.61 58.0,131.55 59.0,131.51 60.0,131.73 61.0,131.69 62.0,131.66 63.0,131.64 64.0,131.55 65.0,131.66 66.0,131.75 67.0,131.84 68.0,131.82 69.0,131.87 70.0,131.84 71.0,131.74 72.0,131.80 73.0,131.93 74.0,131.94 75.0,132.03 76.0,132.11 77.0,131.98 78.0,131.93 79.0,131.87 80.0,131.98 81.0,132.16 82.0,132.06 83.0,132.20 84.0,132.05 85.0,131.90 86.0,132.01 87.0,132.00 88.0,132.17 89.0,132.06 90.0,131.99 91.0,131.92 92.0,131.78 93.0,131.88 94.0,131.86 95.0,131.95 96.0,131.99 97.0,131.97 98.0,131.80 99.0,131.71 100.0,131.81 101.0,131.84 102.0,132.06 103.0,131.97 104.0,131.95 105.0,131.80 106.0,131.78 107.0,131.90 108.0,131.96 109.0,132.00 110.0,132.18 111.0,132.05 112.0,132.03 113.0,131.97 114.0,131.99 115.0,131.91 116.0,132.12 117.0,132.12 118.0,132.03 119.0,131.83 120.0,131.91 121.0,131.81 122.0,131.84 123.0,131.83 124.0,131.85 125.0,131.77 126.0,131.78 127.0,131.66 128.0,131.66 129.0,131.60 130.0,131.65 131.0,131.83 132.0,131.77 133.0,131.66 134.0,131.60 135.0,131.56 136.0,131.62 137.0,131.78 138.0,131.88 139.0,131.77 140.0,131.72 141.0,131.64 142.0,131.61 143.0,131.77 144.0,131.93 145.0,131.97 146.0,131.95 147.0,132.03 148.0,131.83 149.0,131.91 150.0,132.00 151.0,132.13 152.0,132.26 153.0,132.23 154.0,132.22 155.0,132.07 156.0,132.20 157.0,132.28 158.0,132.33 159.0,132.36 160.0,132.26 161.0,132.21 162.0,132.14 163.0,132.09 164.0,132.15 165.0,132.15 166.0,132.21 167.0,131.95 168.0,131.87 169.0,131.88 170.0,131.84 171.0,131.86 172.0,131.91 173.0,131.96 174.0,131.73 175.0,131.59 176.0,131.63 177.0,131.63 178.0,131.79 179.0,131.86 180.0,131.83 181.0,131.80 182.0,131.60 183.0,131.69 184.0,131.76 185.0,131.66 186.0,131.85 187.0,131.96 188.0,131.85 189.0,131.88 190.0,131.74 191.0,131.69 192.0,131.81 193.0,131.93 194.0,132.05 195.0,131.98 196.0,131.94 197.0,131.77 198.0,131.84 199.0,131.87 200.0,132.03 201.0,132.07 202.0,131.88 203.0,131.75 204.0,131.71 205.0,131.73 206.0,131.80 207.0,131.89 208.0,132.00 209.0,131.88 210.0,131.82 211.0,131.83 212.0,131.86 213.0,131.90 214.0,131.98 215.0,131.92 216.0,131.82 217.0,131.85 218.0,131.71 219.0,131.75 220.0,131.86 221.0,132.08 222.0,132.15 223.0,132.11 224.0,132.05 225.0,132.02 226.0,131.98 227.0,132.02 228.0,132.13 229.0,132.22 230.0,132.13 231.0,132.01 232.0,132.11 233.0,132.02 234.0,132.04 235.0,132.12 236.0,132.12 237.0,132.09 238.0,132.03 239.0,131.83 240.0,131.92 241.0,131.87 242.0,131.88 243.0,131.96 244.0,131.86 245.0,131.62 246.0,131.59 247.0,131.70 248.0,131.77 249.0,131.81 250.0,131.64 251.0,131.58 252.0,131.61 253.0,131.42 254.0,131.42 255.0,131.58 256.0,131.72 257.0,131.70 258.0,131.74 259.0,131.70 260.0,131.49 261.0,131.62 262.0,131.77 263.0,131.79 264.0,131.94 265.0,131.82 266.0,131.78 267.0,131.90 268.0,131.96 269.0,132.07 270.0,132.18 271.0,132.14 272.0,132.16 273.0,132.05 274.0,132.09 275.0,131.97 276.0,132.18 277.0,132.22 278.0,132.19 279.0,132.05 280.0,132.05 281.0,131.89 282.0,132.00 283.0,132.06 284.0,132.11 285.0,132.19 286.0,132.01 287.0,131.96 288.0,131.93 289.0,131.79 290.0,131.99 291.0,131.98 292.0,131.91 293.0,131.87 294.0,131.82 295.0,131.74 296.0,131.77 297.0,131.81 298.0,132.02 299.0,131.93 300.0,131.93 301.0,131.85 302.0,131.72 303.0,131.83 304.0,131.91 305.0,131.95 306.0,131.92 307.0,131.95 308.0,131.83 309.0,131.82 310.0,131.87 311.0,131.91 312.0,132.02 313.0,131.99 314.0,131.92 315.0,131.72 316.0,131.73 317.0,131.72 318.0,131.78 319.0,131.96 320.0,131.87 321.0,131.70 322.0,131.62 323.0,131.71 324.0,131.75 325.0,131.76 326.0,131.89 327.0,131.84 328.0,131.79 329.0,131.59 330.0,131.54 331.0,131.58 332.0,131.83 333.0,131.80 334.0,131.82 335.0,131.87 336.0,131.67 337.0,131.65 338.0,131.89 339.0,131.86 340.0,132.08 341.0,132.08 342.0,131.93 343.0,131.92 344.0,132.06 345.0,132.08 346.0,132.18 347.0,132.30 348.0,132.33 349.0,132.24 350.0,132.08 351.0,132.20 352.0,132.14 353.0,132.24 354.0,132.37 355.0,132.27 356.0,132.11 357.0,132.02 358.0,132.05 359.0,131.88 360.0,131.98 361.0,131.96 362.0,132.08 363.0,131.93 364.0,131.86 365.0,131.65 366.0,131.77 367.0,131.86 368.0,131.83 369.0,131.69 370.0,131.61 371.0,131.63 372.0,131.62 373.0,131.51 374.0,131.67 375.0,131.71 376.0,131.82 377.0,131.76 378.0,131.57 379.0,131.62 380.0,131.78 381.0,131.71 382.0,131.85 383.0,131.82 384.0,131.92 385.0,131.70 386.0,131.87 387.0,131.79 388.0,131.98 389.0,132.08 390.0,132.02 391.0,131.88 392.0,131.94 393.0,131.96 394.0,131.94 395.0,132.09 396.0,132.16 397.0,132.12 398.0,132.05 399.0,131.93 400.0,131.89 401.0,131.94 402.0,131.92 403.0,132.06 404.0,131.98 405.0,131.96 406.0,131.84 407.0,131.89 408.0,131.90 409.0,132.04 410.0,131.95 411.0,131.96 412.0,131.96 413.0,131.84 414.0,131.74 415.0,131.99 416.0,131.95 417.0,132.09 418.0,132.07 419.0,131.93 420.0,131.96 421.0,131.94 422.0,131.98 423.0,132.01 424.0,132.20 425.0,132.07 426.0,132.01 427.0,131.95 428.0,131.98 429.0,132.04 430.0,132.17 431.0,132.18 432.0,132.14 433.0,131.89 434.0,131.89 435.0,131.87 436.0,131.92 437.0,131.82 438.0,131.82 439.0,131.80 440.0,131.76 441.0,131.67 442.0,131.62 443.0,131.63 444.0,131.76 445.0,131.73 446.0,131.72 447.0,131.49 448.0,131.41 449.0,131.50 450.0,131.64 451.0,131.60 452.0,131.79 453.0,131.77 454.0,131.79 455.0,131.67 456.0,131.69 457.0,131.79 458.0,131.97 459.0,131.99 460.0,132.10 461.0,132.00 462.0,132.00 463.0,131.97 464.0,132.14 465.0,132.26 466.0,132.27 467.0,132.26 468.0,132.12 469.0,132.07 470.0,132.03 471.0,132.12 472.0,132.19 473.0,132.18 474.0,132.23 475.0,132.13 476.0,131.91 477.0,132.06 478.0,131.98 479.0,132.06 480.0,132.19 481.0,131.95 482.0,131.83 483.0,131.79 484.0,131.74 485.0,131.77 486.0,131.98 487.0,131.91 488.0,131.86 489.0,131.69 490.0,131.62 491.0,131.62 492.0,131.74 493.0,131.76 494.0,131.85 495.0,131.81 496.0,131.82" fill="none" stroke="#2596cc" stroke-width="0.9"/></svg>
<span class="t" style="left:29.5px;top:111.00px;font-size:6.6px;color:#222;">MB/s</span>
<span class="t" style="left:-173.8px;width:200px;text-align:right;top:217.90px;font-size:6.8px;color:#222;">1000</span>
<span class="t" style="left:-173.8px;width:200px;text-align:right;top:200.80px;font-size:6.8px;color:#222;">2000</span>
<span class="t" style="left:-173.8px;width:200px;text-align:right;top:183.70px;font-size:6.8px;color:#222;">3000</span>
<span class="t" style="left:-173.8px;width:200px;text-align:right;top:166.60px;font-size:6.8px;color:#222;">4000</span>
<span class="t" style="left:-173.8px;width:200px;text-align:right;top:149.50px;font-size:6.8px;color:#222;">5000</span>
<span class="t" style="left:-173.8px;width:200px;text-align:right;top:132.40px;font-size:6.8px;color:#222;">6000</span>
<span class="t" style="left:-173.8px;width:200px;text-align:right;top:115.30px;font-size:6.8px;color:#222;">7000</span>
<span class="t" style="left:488px;top:110.60px;font-size:6.6px;color:#222;">ms</span>
<span class="t" style="left:500.3px;top:217.90px;font-size:6.8px;color:#222;">5</span>
<span class="t" style="left:500.3px;top:200.80px;font-size:6.8px;color:#222;">10</span>
<span class="t" style="left:500.3px;top:183.70px;font-size:6.8px;color:#222;">15</span>
<span class="t" style="left:500.3px;top:166.60px;font-size:6.8px;color:#222;">20</span>
<span class="t" style="left:500.3px;top:149.50px;font-size:6.8px;color:#222;">25</span>
<span class="t" style="left:500.3px;top:132.40px;font-size:6.8px;color:#222;">30</span>
<span class="t" style="left:500.3px;top:115.30px;font-size:6.8px;color:#222;">35</span>
<span class="t" style="left:-70.7px;width:200px;text-align:center;top:242.30px;font-size:6.6px;color:#222;">0</span>
<span class="t" style="left:-23.92px;width:200px;text-align:center;top:242.30px;font-size:6.6px;color:#222;">20</span>
<span class="t" style="left:22.86px;width:200px;text-align:center;top:242.30px;font-size:6.6px;color:#222;">40</span>
<span class="t" style="left:69.64000000000001px;width:200px;text-align:center;top:242.30px;font-size:6.6px;color:#222;">60</span>
<span class="t" style="left:116.42000000000002px;width:200px;text-align:center;top:242.30px;font-size:6.6px;color:#222;">80</span>
<span class="t" style="left:163.2px;width:200px;text-align:center;top:242.30px;font-size:6.6px;color:#222;">100</span>
<span class="t" style="left:209.98000000000002px;width:200px;text-align:center;top:242.30px;font-size:6.6px;color:#222;">120</span>
<span class="t" style="left:256.76px;width:200px;text-align:center;top:242.30px;font-size:6.6px;color:#222;">140</span>
<span class="t" style="left:303.54px;width:200px;text-align:center;top:242.30px;font-size:6.6px;color:#222;">160</span>
<span class="t" style="left:350.32px;width:200px;text-align:center;top:242.30px;font-size:6.6px;color:#222;">180</span>
<span class="t" style="left:396.3px;width:200px;text-align:center;top:242.30px;font-size:6.6px;color:#222;">200gB</span>
<div style="left:29px;top:264.5px;width:444.5px;height:1.3px;background:#666;"></div>
<div style="left:164.4px;top:252.5px;width:1.1px;height:62px;background:#5a5a5a;"></div>
<div style="left:226.6px;top:252.5px;width:1.1px;height:62px;background:#5a5a5a;"></div>
<span class="t" style="left:95.5px;width:200px;text-align:center;top:252.20px;font-size:7.5px;color:#1a1a1a;">读取</span>
<span class="t" style="left:158px;width:200px;text-align:center;top:252.20px;font-size:7.5px;color:#1a1a1a;">写入</span>
<span class="t" style="left:32px;top:268.90px;font-size:7.5px;color:#1a1a1a;">顺序</span>
<span class="t" style="left:31.8px;top:284.50px;font-size:7.5px;color:#1a1a1a;"><span style="font-size:7.8px">4KB</span> 随机单</span>
<span class="t" style="left:31.8px;top:300.80px;font-size:7.5px;color:#1a1a1a;"><span style="font-size:7.8px">4KB</span> 随机多</span>
<span class="t" style="left:24.5px;width:200px;text-align:right;top:266.90px;font-size:7.35px;color:#000;font-family:'Liberation Mono','Noto Sans Mono CJK SC',monospace;font-weight:bold;white-space:pre;transform:scaleY(1.12);">6493486 KB/s</span>
<span class="t" style="left:24.5px;width:200px;text-align:right;top:283.70px;font-size:7.35px;color:#000;font-family:'Liberation Mono','Noto Sans Mono CJK SC',monospace;font-weight:bold;white-space:pre;transform:scaleY(1.12);">19784 IOPS</span>
<span class="t" style="left:24.5px;width:200px;text-align:right;top:299.50px;font-size:7.35px;color:#000;font-family:'Liberation Mono','Noto Sans Mono CJK SC',monospace;font-weight:bold;white-space:pre;transform:scaleY(1.12);">147269 IOPS</span>
<span class="t" style="left:88px;width:200px;text-align:right;top:266.90px;font-size:7.35px;color:#000;font-family:'Liberation Mono','Noto Sans Mono CJK SC',monospace;font-weight:bold;white-space:pre;transform:scaleY(1.12);">6317561 KB/s</span>
<span class="t" style="left:88px;width:200px;text-align:right;top:283.70px;font-size:7.35px;color:#000;font-family:'Liberation Mono','Noto Sans Mono CJK SC',monospace;font-weight:bold;white-space:pre;transform:scaleY(1.12);">68705 IOPS</span>
<span class="t" style="left:88px;width:200px;text-align:right;top:299.50px;font-size:7.35px;color:#000;font-family:'Liberation Mono','Noto Sans Mono CJK SC',monospace;font-weight:bold;white-space:pre;transform:scaleY(1.12);">114383 IOPS</span>
<div style="left:114.3px;top:297.8px;width:13.8px;height:15.4px;background:#fff;box-shadow:0 0 0 0.5px #e4e4e4,0 0.6px 0 #aaa;"></div>
<span class="t" style="left:116.8px;top:299.20px;font-size:7.9px;color:#1a1a1a;">32</span>
<div style="left:128.2px;top:297.2px;width:10.4px;height:16.2px;background:#d2d2d2;"></div>
<div style="left:129.1px;top:298.0px;width:8.6px;height:6.8999999999999995px;background:#eeeeee;"></div>
<div style="left:129.1px;top:305.7px;width:8.6px;height:6.8999999999999995px;background:#eeeeee;"></div>
<svg style="left:131.29999999999998px;top:300.25px" width="4.2" height="2.4" viewBox="0 0 4.2 2.4"><path d="M0 2.4 L2.1 0 L4.2 2.4Z" fill="#111"/></svg>
<svg style="left:131.29999999999998px;top:308.04999999999995px" width="4.2" height="2.4" viewBox="0 0 4.2 2.4"><path d="M0 0 L2.1 2.4 L4.2 0Z" fill="#111"/></svg>
<div style="left:10.5px;top:320.3px;width:573px;height:1.2px;background:#cdcdcd;"></div>
<div style="left:32.7px;top:328.5px;width:8.3px;height:8.3px;background:#fcfcfc;border:0.75px solid #8c8c8c;border-radius:1.7px;box-sizing:border-box;"></div>
<span class="t" style="left:43px;top:327.00px;font-size:7.5px;color:#1a1a1a;">块大小测量</span>
<svg style="left:0;top:0" width="600" height="474" viewBox="0 0 600 474"><defs><linearGradient id="g2" x1="0" y1="0" x2="0" y2="1"><stop offset="0" stop-color="#000"/><stop offset="0.18" stop-color="#030303"/><stop offset="0.6" stop-color="#1c1c1c"/><stop offset="1" stop-color="#3d3d3d"/></linearGradient></defs><rect x="20.8" y="350.2" width="490.5" height="87.10000000000002" fill="url(#g2)"/><line x1="20.8" x2="511.3" y1="428.25" y2="428.25" stroke="rgba(255,255,255,0.08)" stroke-width="0.8"/><line x1="20.8" x2="511.3" y1="419.70" y2="419.70" stroke="rgba(255,255,255,0.25)" stroke-width="0.8"/><line x1="20.8" x2="511.3" y1="411.15" y2="411.15" stroke="rgba(255,255,255,0.19)" stroke-width="0.8"/><line x1="20.8" x2="511.3" y1="402.60" y2="402.60" stroke="rgba(255,255,255,0.25)" stroke-width="0.8"/><line x1="20.8" x2="511.3" y1="394.05" y2="394.05" stroke="rgba(255,255,255,0.19)" stroke-width="0.8"/><line x1="20.8" x2="511.3" y1="385.50" y2="385.50" stroke="rgba(255,255,255,0.25)" stroke-width="0.8"/><line x1="20.8" x2="511.3" y1="376.95" y2="376.95" stroke="rgba(255,255,255,0.19)" stroke-width="0.8"/><line x1="20.8" x2="511.3" y1="368.40" y2="368.40" stroke="rgba(255,255,255,0.25)" stroke-width="0.8"/><line x1="20.8" x2="511.3" y1="359.85" y2="359.85" stroke="rgba(255,255,255,0.08)" stroke-width="0.8"/><line x1="38.20" x2="38.20" y1="350.2" y2="437.3" stroke="rgba(255,255,255,0.3)" stroke-width="0.9"/><line x1="70.70" x2="70.70" y1="350.2" y2="437.3" stroke="rgba(255,255,255,0.3)" stroke-width="0.9"/><line x1="103.20" x2="103.20" y1="350.2" y2="437.3" stroke="rgba(255,255,255,0.3)" stroke-width="0.9"/><line x1="135.70" x2="135.70" y1="350.2" y2="437.3" stroke="rgba(255,255,255,0.3)" stroke-width="0.9"/><line x1="168.20" x2="168.20" y1="350.2" y2="437.3" stroke="rgba(255,255,255,0.3)" stroke-width="0.9"/><line x1="200.70" x2="200.70" y1="350.2" y2="437.3" stroke="rgba(255,255,255,0.3)" stroke-width="0.9"/><line x1="233.20" x2="233.20" y1="350.2" y2="437.3" stroke="rgba(255,255,255,0.3)" stroke-width="0.9"/><line x1="265.70" x2="265.70" y1="350.2" y2="437.3" stroke="rgba(255,255,255,0.3)" stroke-width="0.9"/><line x1="298.20" x2="298.20" y1="350.2" y2="437.3" stroke="rgba(255,255,255,0.3)" stroke-width="0.9"/><line x1="330.70" x2="330.70" y1="350.2" y2="437.3" stroke="rgba(255,255,255,0.3)" stroke-width="0.9"/><line x1="363.20" x2="363.20" y1="350.2" y2="437.3" stroke="rgba(255,255,255,0.3)" stroke-width="0.9"/><line x1="395.70" x2="395.70" y1="350.2" y2="437.3" stroke="rgba(255,255,255,0.3)" stroke-width="0.9"/><line x1="428.20" x2="428.20" y1="350.2" y2="437.3" stroke="rgba(255,255,255,0.3)" stroke-width="0.9"/><line x1="460.70" x2="460.70" y1="350.2" y2="437.3" stroke="rgba(255,255,255,0.3)" stroke-width="0.9"/><line x1="493.20" x2="493.20" y1="350.2" y2="437.3" stroke="rgba(255,255,255,0.3)" stroke-width="0.9"/><rect x="21.3" y="350.7" width="489.5" height="86.10000000000002" fill="none" stroke="#000" stroke-width="1.4"/><line x1="38.20" x2="38.20" y1="437.3" y2="439.5" stroke="#8a8a8a" stroke-width="0.7"/><line x1="70.70" x2="70.70" y1="437.3" y2="439.5" stroke="#8a8a8a" stroke-width="0.7"/><line x1="103.20" x2="103.20" y1="437.3" y2="439.5" stroke="#8a8a8a" stroke-width="0.7"/><line x1="135.70" x2="135.70" y1="437.3" y2="439.5" stroke="#8a8a8a" stroke-width="0.7"/><line x1="168.20" x2="168.20" y1="437.3" y2="439.5" stroke="#8a8a8a" stroke-width="0.7"/><line x1="200.70" x2="200.70" y1="437.3" y2="439.5" stroke="#8a8a8a" stroke-width="0.7"/><line x1="233.20" x2="233.20" y1="437.3" y2="439.5" stroke="#8a8a8a" stroke-width="0.7"/><line x1="265.70" x2="265.70" y1="437.3" y2="439.5" stroke="#8a8a8a" stroke-width="0.7"/><line x1="298.20" x2="298.20" y1="437.3" y2="439.5" stroke="#8a8a8a" stroke-width="0.7"/><line x1="330.70" x2="330.70" y1="437.3" y2="439.5" stroke="#8a8a8a" stroke-width="0.7"/><line x1="363.20" x2="363.20" y1="437.3" y2="439.5" stroke="#8a8a8a" stroke-width="0.7"/><line x1="395.70" x2="395.70" y1="437.3" y2="439.5" stroke="#8a8a8a" stroke-width="0.7"/><line x1="428.20" x2="428.20" y1="437.3" y2="439.5" stroke="#8a8a8a" stroke-width="0.7"/><line x1="460.70" x2="460.70" y1="437.3" y2="439.5" stroke="#8a8a8a" stroke-width="0.7"/><line x1="493.20" x2="493.20" y1="437.3" y2="439.5" stroke="#8a8a8a" stroke-width="0.7"/></svg>
<span class="t" style="left:22px;top:340.30px;font-size:6.6px;color:#222;">MB/s</span>
<span class="t" style="left:-181px;width:200px;text-align:right;top:414.20px;font-size:6.8px;color:#222;">5</span>
<span class="t" style="left:-181px;width:200px;text-align:right;top:397.10px;font-size:6.8px;color:#222;">10</span>
<span class="t" style="left:-181px;width:200px;text-align:right;top:380.00px;font-size:6.8px;color:#222;">15</span>
<span class="t" style="left:-181px;width:200px;text-align:right;top:362.90px;font-size:6.8px;color:#222;">20</span>
<span class="t" style="left:-181px;width:200px;text-align:right;top:345.80px;font-size:6.8px;color:#222;">25</span>
<span class="t" style="left:-62.099999999999994px;width:200px;text-align:center;top:438.40px;font-size:6.7px;color:#222;">0.5</span>
<span class="t" style="left:-29.599999999999994px;width:200px;text-align:center;top:438.40px;font-size:6.7px;color:#222;">1</span>
<span class="t" style="left:2.9000000000000057px;width:200px;text-align:center;top:438.40px;font-size:6.7px;color:#222;">2</span>
<span class="t" style="left:35.39999999999998px;width:200px;text-align:center;top:438.40px;font-size:6.7px;color:#222;">4</span>
<span class="t" style="left:67.89999999999998px;width:200px;text-align:center;top:438.40px;font-size:6.7px;color:#222;">8</span>
<span class="t" style="left:100.39999999999998px;width:200px;text-align:center;top:438.40px;font-size:6.7px;color:#222;">16</span>
<span class="t" style="left:132.89999999999998px;width:200px;text-align:center;top:438.40px;font-size:6.7px;color:#222;">32</span>
<span class="t" style="left:165.39999999999998px;width:200px;text-align:center;top:438.40px;font-size:6.7px;color:#222;">64</span>
<span class="t" style="left:197.89999999999998px;width:200px;text-align:center;top:438.40px;font-size:6.7px;color:#222;">128</span>
<span class="t" style="left:230.39999999999998px;width:200px;text-align:center;top:438.40px;font-size:6.7px;color:#222;">256</span>
<span class="t" style="left:262.9px;width:200px;text-align:center;top:438.40px;font-size:6.7px;color:#222;">512</span>
<span class="t" style="left:295.4px;width:200px;text-align:center;top:438.40px;font-size:6.7px;color:#222;">1024</span>
<span class="t" style="left:327.9px;width:200px;text-align:center;top:438.40px;font-size:6.7px;color:#222;">2048</span>
<span class="t" style="left:360.4px;width:200px;text-align:center;top:438.40px;font-size:6.7px;color:#222;">4096</span>
<span class="t" style="left:392.9px;width:200px;text-align:center;top:438.40px;font-size:6.7px;color:#222;">8192</span>
<div style="left:470.3px;top:343.4px;width:4.8px;height:4.2px;background:#1e7fd8;"></div>
<span class="t" style="left:475.3px;top:339.50px;font-size:7.3px;color:#1a1a1a;">读取</span>
<div style="left:493.7px;top:343.4px;width:4.8px;height:4.2px;background:#e58a1a;"></div>
<span class="t" style="left:498.8px;top:339.50px;font-size:7.3px;color:#1a1a1a;">写入</span>
<div style="left:531px;top:98px;width:54.5px;height:17.5px;background:#fdfdfd;border:1px solid #4f98e0;border-radius:2.5px;box-sizing:border-box;"></div>
<span class="t" style="left:458.29999999999995px;width:200px;text-align:center;top:100.80px;font-size:7.6px;color:#1a1a1a;">开始</span>
<span class="t" style="left:530px;top:121.30px;font-size:7.5px;color:#1a1a1a;">驱动器</span>
<div style="left:531px;top:138px;width:55px;height:15px;background:#fdfdfd;border-radius:2px;box-shadow:0 0 0 0.5px #e2e2e2, 0 0.6px 0 #b8b8b8;"></div>
<span class="t" style="left:532.8px;top:139.70px;font-size:7.9px;color:#1a1a1a;">D:</span>
<svg style="left:577px;top:143.9px" width="6" height="4" viewBox="0 0 6 4"><path d="M0.4 0.5 L3 3.2 L5.6 0.5" stroke="#666" stroke-width="0.8" fill="none"/></svg>
<span class="t" style="left:530px;top:160.30px;font-size:7.5px;color:#1a1a1a;">文件长度</span>
<div style="left:530.6px;top:180.5px;width:30px;height:15.5px;background:#fff;box-shadow:0 0 0 0.5px #e4e4e4,0 0.6px 0 #999;"></div>
<span class="t" style="left:532.6px;top:182.00px;font-size:7.95px;color:#1a1a1a;">200000</span>
<div style="left:560.9px;top:180.4px;width:9.8px;height:16.2px;background:#d2d2d2;"></div>
<div style="left:561.8px;top:181.20000000000002px;width:8.0px;height:6.8999999999999995px;background:#eeeeee;"></div>
<div style="left:561.8px;top:188.9px;width:8.0px;height:6.8999999999999995px;background:#eeeeee;"></div>
<svg style="left:563.6999999999999px;top:183.45000000000002px" width="4.2" height="2.4" viewBox="0 0 4.2 2.4"><path d="M0 2.4 L2.1 0 L4.2 2.4Z" fill="#111"/></svg>
<svg style="left:563.6999999999999px;top:191.25px" width="4.2" height="2.4" viewBox="0 0 4.2 2.4"><path d="M0 0 L2.1 2.4 L4.2 0Z" fill="#111"/></svg>
<span class="t" style="left:572.3px;top:185.00px;font-size:7.9px;color:#1a1a1a;">MB</span>
<span class="t" style="left:530px;top:210.30px;font-size:7.5px;color:#1a1a1a;">数据模式</span>
<div style="left:531px;top:227.5px;width:55px;height:15px;background:#fdfdfd;border-radius:2px;box-shadow:0 0 0 0.5px #e2e2e2, 0 0.6px 0 #b8b8b8;"></div>
<span class="t" style="left:532.8px;top:229.20px;font-size:7.9px;color:#1a1a1a;">零</span>
<svg style="left:577px;top:233.4px" width="6" height="4" viewBox="0 0 6 4"><path d="M0.4 0.5 L3 3.2 L5.6 0.5" stroke="#666" stroke-width="0.8" fill="none"/></svg>
<span class="t" style="left:530px;top:361.60px;font-size:7.5px;color:#1a1a1a;">文件长度</span>
<div style="left:531px;top:380px;width:55px;height:15px;background:#fdfdfd;border-radius:2px;box-shadow:0 0 0 0.5px #e2e2e2, 0 0.6px 0 #b8b8b8;"></div>
<span class="t" style="left:532.8px;top:381.70px;font-size:7.9px;color:#1a1a1a;">64 MB</span>
<svg style="left:577px;top:385.9px" width="6" height="4" viewBox="0 0 6 4"><path d="M0.4 0.5 L3 3.2 L5.6 0.5" stroke="#666" stroke-width="0.8" fill="none"/></svg>
<span class="t" style="left:530px;top:406.60px;font-size:7.5px;color:#1a1a1a;">延迟</span>
<div style="left:531px;top:423.2px;width:39px;height:16px;background:#fff;box-shadow:0 0 0 0.5px #e4e4e4,0 0.6px 0 #999;"></div>
<span class="t" style="left:533.4px;top:424.80px;font-size:7.9px;color:#1a1a1a;">0</span>
<div style="left:573.7px;top:421.2px;width:9.8px;height:18px;background:#d2d2d2;"></div>
<div style="left:574.6px;top:422.0px;width:8.0px;height:7.8px;background:#eeeeee;"></div>
<div style="left:574.6px;top:430.6px;width:8.0px;height:7.8px;background:#eeeeee;"></div>
<svg style="left:576.5px;top:424.7px" width="4.2" height="2.4" viewBox="0 0 4.2 2.4"><path d="M0 2.4 L2.1 0 L4.2 2.4Z" fill="#111"/></svg>
<svg style="left:576.5px;top:433.4px" width="4.2" height="2.4" viewBox="0 0 4.2 2.4"><path d="M0 0 L2.1 2.4 L4.2 0Z" fill="#111"/></svg>
</body></html>
